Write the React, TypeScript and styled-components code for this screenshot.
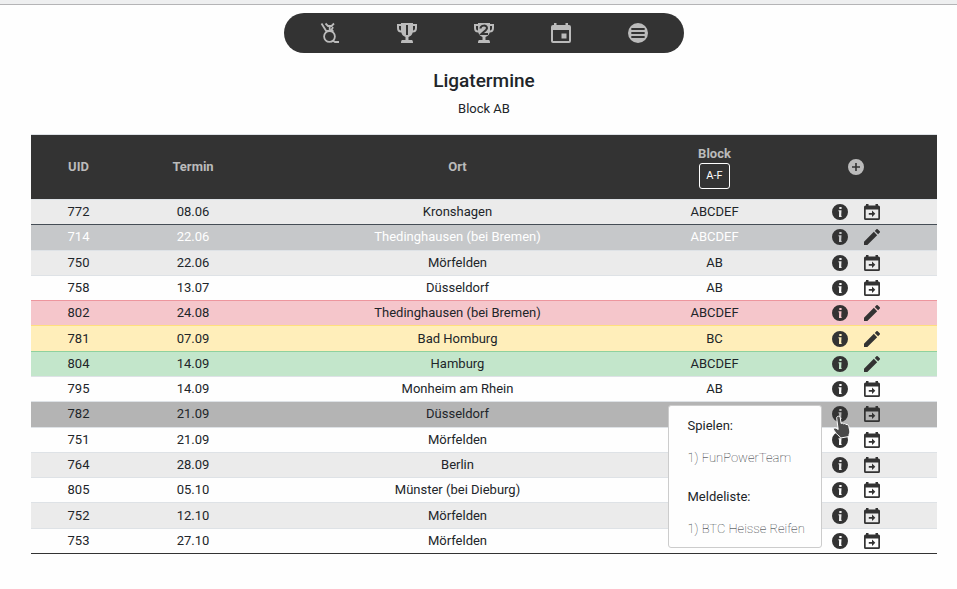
import React from 'react';
import styled, { createGlobalStyle, css } from 'styled-components';

const GlobalStyle = createGlobalStyle`
  *, *::before, *::after { box-sizing: border-box; }
  body {
    margin: 0;
    background: #fefefe;
    color: #212529;
    font: 13px/20px Roboto, "Liberation Sans", sans-serif;
  }
`;

const TopStrip = styled.div`
  height: 5px;
  background: #eeeff0;
  border-bottom: 1px solid #b4b4b6;
`;

const Page = styled.main`
  padding: 8px 20px 35px 31px;
`;

const Nav = styled.nav`
  display: flex;
  max-width: 400px;
  height: 40px;
  margin: 0 auto;
  padding: 0 8px;
  border-radius: 20px;
  background: #333;
`;

const NavLink = styled.a`
  flex: 1;
  display: flex;
  align-items: center;
  justify-content: center;
  color: #bbb;
`;

const Heading = styled.header`
  padding: 16px 0 15px;
  text-align: center;
`;

const Title = styled.h1`
  margin: 0;
  font-size: 19px;
  line-height: 24px;
  font-weight: 500;
`;

const Subtitle = styled.p`
  margin: 6px 0 0;
`;

const Table = styled.table`
  width: 100%;
  height: 420px;
  table-layout: fixed;
  border-spacing: 0;
  border-top: 1px solid #dee2e6;
  border-bottom: 1px solid #333;
  text-align: center;
`;

const Col = styled.col<{ $w?: number }>`
  width: ${(p) => (p.$w ? `${p.$w}px` : 'auto')};
`;

const HeadCell = styled.th`
  height: 64px;
  padding: 0;
  background: #333;
  color: #bbb;
  font-weight: 700;
`;

const BlockHead = styled.div`
  display: flex;
  flex-direction: column;
  align-items: center;
  line-height: 18px;
`;

const FilterButton = styled.button`
  height: 26px;
  padding: 0 6px;
  border: 1px solid #fff;
  border-radius: 3px;
  background: transparent;
  color: #fff;
  font: 11px/16px Roboto, sans-serif;
`;

type Tone = 'muted' | 'danger' | 'warning' | 'success' | 'hover';

const tones: Record<Tone, { bg: string; line: string; text?: string }> = {
  muted: { bg: '#c6c8ca', line: '#454d55', text: '#fff' },
  danger: { bg: '#f5c6cb', line: '#ed969e' },
  warning: { bg: '#ffeeba', line: '#ffdf7e' },
  success: { bg: '#c3e6cb', line: '#8fd19e' },
  hover: { bg: '#b4b4b4', line: '#dee2e6' },
};

const Row = styled.tr<{ $tone?: Tone }>`
  background: #fefefe;
  --line: #dee2e6;
  &:nth-child(odd) { background: #ebebeb; }
  ${(p) =>
    p.$tone &&
    css`
      && {
        background: ${tones[p.$tone].bg};
        color: ${tones[p.$tone].text ?? 'inherit'};
        --line: ${tones[p.$tone].line};
      }
    `}
`;

const Cell = styled.td`
  padding: 0;
  border-top: 1px solid var(--line);
`;

const Actions = styled.div`
  display: flex;
  justify-content: center;
  gap: 16px;
`;

const Anchor = styled.div`
  position: relative;
  height: 16px;
`;

const IconButton = styled.button`
  display: block;
  width: 16px;
  height: 16px;
  padding: 0;
  border: 0;
  background: none;
  color: #333;
`;

const AddButton = styled(IconButton)`
  margin: 0 auto;
  color: #bbb;
`;

const Icon = styled.svg`
  display: block;
  fill: currentColor;
`;

const Popover = styled.div`
  position: absolute;
  z-index: 1;
  top: -1px;
  right: 26px;
  width: 154px;
  padding: 10px 19px 8px;
  border: 1px solid #ccc;
  border-radius: 3px;
  background: #fefefe;
  text-align: left;
  white-space: nowrap;
`;

const PopoverTitle = styled.h2`
  margin: 0 0 12px;
  font-size: 13px;
  line-height: 20px;
  font-weight: 400;
`;

const PopoverList = styled.ol`
  margin: 0;
  padding: 0;
  list-style: none;
  font-weight: 100;
  & + h2 { margin-top: 19px; }
`;

const Pointer = styled.svg`
  position: absolute;
  z-index: 2;
  top: 9px;
  left: 0;
  pointer-events: none;
`;

const MedalIcon = () => (
  <Icon width="20" height="22" viewBox="0 0 20 22" aria-hidden="true">
    <g fill="none" stroke="currentColor" strokeWidth="1.8">
      <circle cx="9.5" cy="14.500" r="5.4" />
      <path d="M1.500 1.500 6.500 9.500M5.500 1.500l2.500 2.500h3.500l2.500-2.500M9.700 4v4.500M13 5l-2 4M6 9h7.500M11.500 19.500l2-.5 1.500 1h4" />
    </g>
  </Icon>
);

const TrophyIcon = ({ place }: { place: 1 | 2 }) => (
  <Icon width="20" height="20" viewBox="0 0 20 20" aria-hidden="true">
    <path
      fillRule="evenodd"
      d="M4 0h12v1h4v4c0 3-1.500 4.500-4.300 4.600C15 12 13.500 13.500 11.500 14v3H15c.8.500 1 1.500 1 3H4c0-1.500.2-2.500 1-3h3.500v-3C6.500 13.500 5 12 4.300 9.600 1.500 9.500 0 8 0 5V1h4zM2 3v2c0 1.500.6 2.300 2 2.500V3zm14 0v4.500c1.400-.2 2-1 2-2.500V3z"
    />
    {place === 1 ? (
      <path d="M10 2v10" fill="none" stroke="#333" strokeWidth="2" />
    ) : (
      <path d="M6.500 5.500c0-3.500 6.500-4 6.500-.5 0 2-3 3.500-5.500 6H14" fill="none" stroke="#333" strokeWidth="2" />
    )}
  </Icon>
);

const EventIcon = () => (
  <Icon width="20" height="20" viewBox="0 0 20 20" aria-hidden="true">
    <path
      fillRule="evenodd"
      d="M3 0h2.500v2h9V0H17v2h1a2 2 0 0 1 2 2v14a2 2 0 0 1-2 2H2a2 2 0 0 1-2-2V4a2 2 0 0 1 2-2h1zM2 7v11h16V7zm8.500 3.500h5v5h-5z"
    />
  </Icon>
);

const MenuIcon = () => (
  <Icon width="20" height="20" viewBox="0 0 20 20" aria-hidden="true">
    <circle cx="10" cy="10" r="10" />
    <path d="M4 6h12M4 10h12M4 14h12" stroke="#333" strokeWidth="1.800" strokeLinecap="round" />
  </Icon>
);

const AddIcon = () => (
  <Icon width="16" height="16" viewBox="2 2 20 20" aria-hidden="true">
    <path d="M12 2a10 10 0 1 0 0 20 10 10 0 0 0 0-20zm5 11h-4v4h-2v-4H7v-2h4V7h2v4h4z" />
  </Icon>
);

const InfoIcon = () => (
  <Icon width="16" height="16" viewBox="0 0 16 16" aria-hidden="true">
    <path
      fillRule="evenodd"
      d="M8 0a8 8 0 1 0 0 16A8 8 0 0 0 8 0zM7.300 3h2.300v2H7.300zM6.500 6.200h3l-.3 5.500.6.300-.3 1H7l.1-5.500-.6-.3z"
    />
  </Icon>
);

const CalendarArrowIcon = () => (
  <Icon width="16" height="16" viewBox="0 0 16 16" aria-hidden="true">
    <path
      fillRule="evenodd"
      d="M2 0h2.500v1.500h7V0H14v1.500h.5A1.500 1.500 0 0 1 16 3v11.500a1.500 1.500 0 0 1-1.500 1.500h-13A1.500 1.500 0 0 1 0 14.500V3a1.500 1.500 0 0 1 1.500-1.500H2zM1.700 5.500v8.800h12.600V5.500zM8 6.500l3.300 3.300L8 13v-2.300H4.800V9H8z"
    />
  </Icon>
);

const EditIcon = () => (
  <Icon width="16" height="16" viewBox="3 3 18 18" aria-hidden="true">
    <path d="M3 17.250V21h3.750L17.810 9.940l-3.750-3.750zM20.710 7.040a1 1 0 0 0 0-1.410l-2.340-2.340a1 1 0 0 0-1.410 0l-1.830 1.830 3.750 3.750z" />
  </Icon>
);

const HandPointer = () => (
  <Pointer width="19" height="24" viewBox="0 0 19 24" aria-hidden="true">
    <path
      d="M6.500 1.200c1 0 1.600.7 1.800 1.800l.8 5.500c1-.6 2-.3 2.500.4.900-.5 1.900-.2 2.400.6 1.500-.3 2.500.5 2.800 2l1 4.500c.2 1.500-.3 2.500-.8 3.500v2l-8.500 1.500-.8-1.500c-2.500-1.500-4-4-6-6.500-1-1.500.8-2.800 2.500-1.700l2 1.200L4.700 3.200c-.2-1.200.8-2 1.800-2z"
      fill="#4a4a4a"
      stroke="#fff"
    />
  </Pointer>
);

interface Event {
  uid: number;
  date: string;
  place: string;
  block: string;
  tone?: Tone;
  editable?: boolean;
  open?: boolean;
}

const events: Event[] = [
  { uid: 772, date: '08.06', place: 'Kronshagen', block: 'ABCDEF' },
  { uid: 714, date: '22.06', place: 'Thedinghausen (bei Bremen)', block: 'ABCDEF', tone: 'muted', editable: true },
  { uid: 750, date: '22.06', place: 'Mörfelden', block: 'AB' },
  { uid: 758, date: '13.07', place: 'Düsseldorf', block: 'AB' },
  { uid: 802, date: '24.08', place: 'Thedinghausen (bei Bremen)', block: 'ABCDEF', tone: 'danger', editable: true },
  { uid: 781, date: '07.09', place: 'Bad Homburg', block: 'BC', tone: 'warning', editable: true },
  { uid: 804, date: '14.09', place: 'Hamburg', block: 'ABCDEF', tone: 'success', editable: true },
  { uid: 795, date: '14.09', place: 'Monheim am Rhein', block: 'AB' },
  { uid: 782, date: '21.09', place: 'Düsseldorf', block: '', tone: 'hover', open: true },
  { uid: 751, date: '21.09', place: 'Mörfelden', block: '' },
  { uid: 764, date: '28.09', place: 'Berlin', block: '' },
  { uid: 805, date: '05.10', place: 'Münster (bei Dieburg)', block: '' },
  { uid: 752, date: '12.10', place: 'Mörfelden', block: '' },
  { uid: 753, date: '27.10', place: 'Mörfelden', block: '' },
];

const EventRow = ({ event }: { event: Event }) => (
  <Row $tone={event.tone}>
    <Cell>{event.uid}</Cell>
    <Cell>{event.date}</Cell>
    <Cell>{event.place}</Cell>
    <Cell>{event.block}</Cell>
    <Cell>
      <Actions>
        <Anchor>
          <IconButton type="button" aria-label="Info">
            <InfoIcon />
          </IconButton>
          {event.open && (
            <>
              <Popover role="tooltip">
                <PopoverTitle>Spielen:</PopoverTitle>
                <PopoverList>
                  <li>1) FunPowerTeam</li>
                </PopoverList>
                <PopoverTitle>Meldeliste:</PopoverTitle>
                <PopoverList>
                  <li>1) BTC Heisse Reifen</li>
                </PopoverList>
              </Popover>
              <HandPointer />
            </>
          )}
        </Anchor>
        <IconButton type="button" aria-label={event.editable ? 'Bearbeiten' : 'Anmelden'}>
          {event.editable ? <EditIcon /> : <CalendarArrowIcon />}
        </IconButton>
      </Actions>
    </Cell>
  </Row>
);

export default function App() {
  return (
    <>
      <GlobalStyle />
      <TopStrip />
      <Page>
        <Nav aria-label="Navigation">
          <NavLink href="#medaille" aria-label="Medaille"><MedalIcon /></NavLink>
          <NavLink href="#liga-1" aria-label="Liga 1"><TrophyIcon place={1} /></NavLink>
          <NavLink href="#liga-2" aria-label="Liga 2"><TrophyIcon place={2} /></NavLink>
          <NavLink href="#termine" aria-label="Termine"><EventIcon /></NavLink>
          <NavLink href="#menu" aria-label="Menü"><MenuIcon /></NavLink>
        </Nav>
        <Heading>
          <Title>Ligatermine</Title>
          <Subtitle>Block AB</Subtitle>
        </Heading>
        <Table>
          <colgroup>
            <Col $w={95} />
            <Col $w={134} />
            <Col />
            <Col $w={119} />
            <Col $w={163} />
          </colgroup>
          <thead>
            <tr>
              <HeadCell scope="col">UID</HeadCell>
              <HeadCell scope="col">Termin</HeadCell>
              <HeadCell scope="col">Ort</HeadCell>
              <HeadCell scope="col">
                <BlockHead>
                  Block
                  <FilterButton type="button">A-F</FilterButton>
                </BlockHead>
              </HeadCell>
              <HeadCell scope="col">
                <AddButton type="button" aria-label="Hinzufügen"><AddIcon /></AddButton>
              </HeadCell>
            </tr>
          </thead>
          <tbody>
            {events.map((event) => (
              <EventRow key={event.uid} event={event} />
            ))}
          </tbody>
        </Table>
      </Page>
    </>
  );
}
